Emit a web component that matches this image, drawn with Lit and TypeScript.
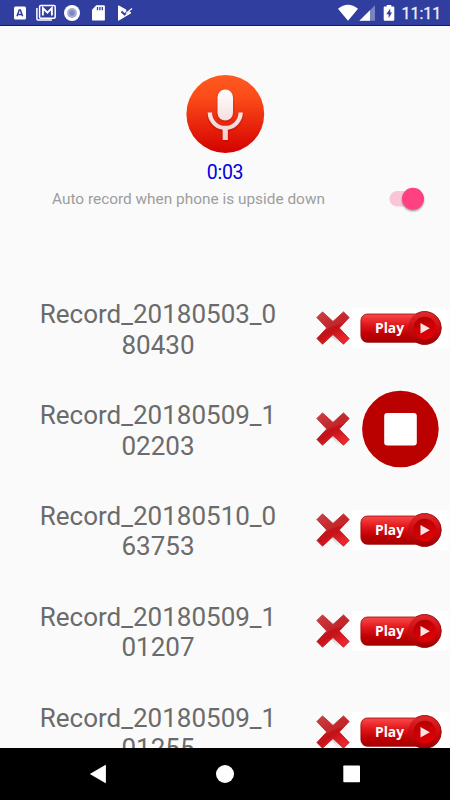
import { LitElement, html, css, svg } from "lit";
import { customElement, property } from "lit/decorators.js";

@customElement("status-bar")
class StatusBar extends LitElement {
  static styles = css`
    :host { display: flex; height: 26px; box-sizing: border-box; background: #303f9f; border-bottom: 1px solid #10187c; }
    svg { display: block; flex: none; }
    .space { flex: 1; }
    .time { color: #eef0f8; font: 400 16px/28px Roboto, sans-serif; width: 48.5px; -webkit-text-stroke: 0.3px #eef0f8; }
  `;
  render() {
    return html`
      <svg width="150" height="25" fill="#fff">
        <rect x="14" y="6.5" width="12" height="13" rx="1.5" />
        <path d="M17 16.2 19.2 10h1.2l2.2 6.2M17.8 14.4h4" fill="none" stroke="#303f9f" stroke-width="1.5" />
        <path d="M36.9 8v10.9q0 1 1 1h14" fill="none" stroke="#fff" stroke-width="1.5" />
        <rect x="39.6" y="5.6" width="15.6" height="12.6" rx="1.2" fill="none" stroke="#fff" stroke-width="1.5" />
        <path d="M42.9 15.5V8l4.5 4.6 4.5-4.6v7.5" fill="none" stroke="#fff" stroke-width="1.9" />
        <circle cx="72" cy="13" r="8" />
        <circle cx="72" cy="13" r="4.9" fill="#a4abd6" />
        <circle cx="72" cy="13" r="2.7" fill="#7f88c4" />
        <path d="M96.3 5.2h7.4q1.2 0 1.2 1.2v13q0 1.2-1.2 1.2H93.2q-1.2 0-1.2-1.2V9.7Z" />
        <path d="M97.5 7v3.2M99.9 7v3.2M102.3 7v3.2" stroke="#303f9f" stroke-width="1.3" />
        <path d="M118.5 5.8 131 12.8 118.5 20.3Z" stroke="#fff" stroke-width="1" stroke-linejoin="round" />
        <path d="m121.500 11.600 3 2.800 6.500-5.800" fill="none" stroke="#303f9f" stroke-width="2" />
        <path d="m126.500 10.700 4.600-4" fill="none" stroke="#303f9f" stroke-width="2" />
        <path d="m126 13.500 6-5" fill="none" stroke="#fff" stroke-width="1.2" />
      </svg>
      <div class="space"></div>
      <svg width="65" height="25" viewBox="337 0 65 25" fill="#fff">
        <path d="M338 8.8q10-8 20 0L348 20.8Z" />
        <path d="M375 5.2v15.6h-15.6Z" fill="#7983c1" />
        <path d="M370 10.2v10.6h-10.6Z" />
        <path d="M386.7 5h4.6v1.6h2q1 0 1 1v12.2q0 1-1 1h-8.6q-1 0-1-1v-12.2q0-1 1-1h2Z" />
        <path d="m390.2 8.5-3.9 5.7h2.3v4l3.400-5.700h-1.800Z" fill="#303f9f" />
      </svg>
      <div class="time">11:11</div>
    `;
  }
}

@customElement("delete-icon")
class DeleteIcon extends LitElement {
  static styles = css`:host, svg { display: block; }`;
  render() {
    return html`<svg width="36" height="36" viewBox="0 0 36 36">
      <defs>
        <linearGradient id="g" x1="0" y1="0" x2="0.6" y2="1">
          <stop offset="0" stop-color="#cc3236" /><stop offset=".45" stop-color="#c0191d" />
          <stop offset=".65" stop-color="#c41218" /><stop offset="1" stop-color="#ee252e" />
        </linearGradient>
        <linearGradient id="s" x1="0" y1="0" x2="0" y2="1">
          <stop offset="0" stop-color="#c9c9c9" /><stop offset="1" stop-color="#f5f5f5" />
        </linearGradient>
        <clipPath id="c"><path d="M7.500 1.900 18 11.400 28.500 1.900 34.200 7.500 24.300 18 34.200 28.500 28.500 34.200 18 24.600 7.500 34.200 1.900 28.500 11.700 18 1.900 7.500Z" /></clipPath>
      </defs>
      <path d="M18 22 30 34.500 22 32.500 15 25Z" fill="url(#s)" />
      <path d="M7.500 1.900 18 11.400 28.500 1.900 34.200 7.500 24.300 18 34.200 28.500 28.500 34.200 18 24.600 7.500 34.200 1.900 28.500 11.700 18 1.900 7.500Z"
        fill="url(#g)" stroke="#b3191c" stroke-width=".8" stroke-linejoin="round" />
      <path clip-path="url(#c)" d="M0 0H36V13Q20 13 11 20L0 16Z" fill="#fff" opacity=".07" />
    </svg>`;
  }
}

@customElement("play-button")
class PlayButton extends LitElement {
  static styles = css`
    :host { display: block; background: #fff; }
    svg { display: block; }
    .label { font: 700 14px "Open Sans", "Noto Sans", sans-serif; fill: #fff; }
  `;
  render() {
    return html`<svg width="97" height="40" viewBox="0 0 97 40">
      <defs>
        <linearGradient id="b" x1="0" y1="0" x2="0" y2="1">
          <stop offset="0" stop-color="#fb4a4a" /><stop offset=".4" stop-color="#df1519" />
          <stop offset=".72" stop-color="#bd0003" /><stop offset="1" stop-color="#a80002" />
        </linearGradient>
        <linearGradient id="r" x1="0" y1="0" x2="0" y2="1">
          <stop offset="0" stop-color="#e02b2e" /><stop offset=".45" stop-color="#d00c10" /><stop offset="1" stop-color="#a00002" />
        </linearGradient>
        <linearGradient id="i" x1=".2" y1="0" x2=".6" y2="1">
          <stop offset="0" stop-color="#b00004" /><stop offset="1" stop-color="#e40004" />
        </linearGradient>
      </defs>
      <rect x="8.9" y="6" width="74" height="28.3" rx="6.5" fill="url(#b)" stroke="#9c0709" stroke-width=".8" />
      <circle cx="72.7" cy="20" r="16.6" fill="url(#r)" />
      <path d="M64.200 5.700A16.600 16.600 0 1 1 64.200 34.300" fill="none" stroke="#98080a" stroke-width=".9" />
      <circle cx="72.700" cy="20" r="11.200" fill="url(#i)" />
      <path d="M68.500 15 77.800 20.200 68.500 25.400Z" fill="#f8e4e4" />
      <text class="label" x="23" y="24.5" textLength="29" lengthAdjust="spacingAndGlyphs">Play</text>
    </svg>`;
  }
}

@customElement("stop-button")
class StopButton extends LitElement {
  static styles = css`:host, svg { display: block; }`;
  render() {
    return html`<svg width="97" height="78" viewBox="0 0 97 78">
      <circle cx="48.4" cy="39" r="38.3" fill="#bb0000" />
      <rect x="32.2" y="23" width="32.6" height="32.6" rx="3" fill="#fff" />
    </svg>`;
  }
}

@customElement("record-row")
class RecordRow extends LitElement {
  @property() name = "";
  @property({ type: Boolean }) playing = false;
  static styles = css`
    :host { display: flex; flex: none; height: 100.8px; align-items: center; }
    .name { width: 244px; margin: 0 35px 0 36px; padding-top: 3px; text-align: center; word-break: break-all;
      color: #6b6b6b; font: 26px/30.5px Roboto, sans-serif; }
    delete-icon { width: 37px; flex: none; }
  `;
  render() {
    return html`<div class="name">${this.name}</div>
      <delete-icon></delete-icon>
      ${this.playing ? html`<stop-button></stop-button>` : html`<play-button></play-button>`}`;
  }
}

@customElement("app-root")
class AppRoot extends LitElement {
  static styles = css`
    :host { display: flex; flex-direction: column; width: 450px; height: 800px; overflow: hidden;
      background: #fafafa; font-family: Roboto, sans-serif; }
    status-bar, .nav, .head { flex: none; }
    .head { height: 252px; display: flex; flex-direction: column; align-items: center; }
    .mic { display: block; margin-top: 48px; flex: none; }
    .timer { color: #0000e0; font-size: 19.5px; line-height: 22px; margin-top: 8px; letter-spacing: -0.3px; }
    .auto { display: flex; align-items: center; align-self: stretch; height: 30px; padding: 0 22px 0 52px; justify-content: space-between; }
    .hint { color: #9d9d9d; font-size: 15.4px; line-height: 20px; white-space: nowrap; }
    .list { flex: 1; min-height: 0; overflow: hidden; display: flex; flex-direction: column; }
    .nav { height: 52px; background: #000; }
    .nav svg { display: block; }
  `;
  private records = [
    { name: "Record_20180503_080430", playing: false },
    { name: "Record_20180509_102203", playing: true },
    { name: "Record_20180510_063753", playing: false },
    { name: "Record_20180509_101207", playing: false },
    { name: "Record_20180509_101255", playing: false },
  ];
  private glyph = svg`
    <rect x="31.5" y="15.6" width="15.5" height="31" rx="7.75" />
    <path d="M21.7 38.6h4.3a13.25 13.25 0 0 0 26.5 0h4.3a17.55 17.55 0 0 1-14.95 17.1V66h-5.2V55.7A17.55 17.55 0 0 1 21.7 38.6Z" />`;
  render() {
    return html`
      <status-bar></status-bar>
      <div class="head">
        <svg class="mic" width="79" height="80" viewBox="0 0 79 80">
          <defs>
            <linearGradient id="o" x1="0" y1="0" x2="0" y2="1">
              <stop offset="0" stop-color="#ff5a20" /><stop offset=".3" stop-color="#fb4a18" /><stop offset="1" stop-color="#d40000" />
            </linearGradient>
            <linearGradient id="w" gradientUnits="userSpaceOnUse" x1="0" y1="15" x2="0" y2="65">
              <stop offset="0" stop-color="#fff" /><stop offset="1" stop-color="#efcdcd" />
            </linearGradient>
            <filter id="f"><feGaussianBlur stdDeviation="1" /></filter>
          </defs>
          <circle cx="39.3" cy="40" r="38.9" fill="url(#o)" />
          <g fill="#8c1000" opacity=".5" filter="url(#f)" transform="translate(0 1)">${this.glyph}</g>
          <g fill="url(#w)">${this.glyph}</g>
        </svg>
        <div class="timer">0:03</div>
        <div class="auto">
          <span class="hint">Auto record when phone is upside down</span>
          <svg width="42" height="30" viewBox="386 184 42 30">
            <defs><filter id="k" x="-50%" y="-50%" width="200%" height="200%"><feGaussianBlur stdDeviation="1.3" /></filter></defs>
            <rect x="389.5" y="191" width="32" height="15.5" rx="7.7" fill="#fbc5d8" />
            <circle cx="413" cy="200.3" r="10.8" fill="#000" opacity=".4" filter="url(#k)" />
            <circle cx="413" cy="198.7" r="11" fill="#ff4081" />
          </svg>
        </div>
      </div>
      <div class="list">
        ${this.records.map((r) => html`<record-row .name=${r.name} .playing=${r.playing}></record-row>`)}
      </div>
      <div class="nav">
        <svg width="450" height="52" viewBox="0 748 450 52" fill="#fff">
          <path d="M90.5 774 105.5 765.3V782.7Z" stroke="#fff" stroke-width=".8" stroke-linejoin="round" />
          <circle cx="225" cy="774" r="9" />
          <rect x="343.3" y="765.5" width="16.7" height="16.7" rx=".8" />
        </svg>
      </div>
    `;
  }
}
